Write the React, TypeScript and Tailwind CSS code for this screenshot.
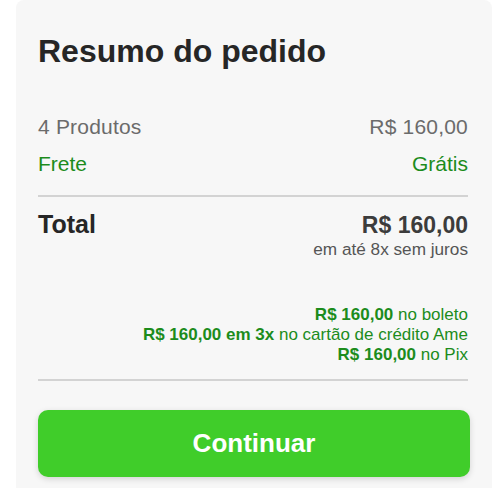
import React from "react"

const options = [
    { price: "R$ 160,00", extra: "", rest: " no boleto" },
    { price: "R$ 160,00", extra: " em 3x", rest: " no cartão de crédito Ame" },
    { price: "R$ 160,00", extra: "", rest: " no Pix" },
]

const App: React.FC = () => {
    return (
        <div className="min-h-screen bg-white font-['Liberation_Sans',Arial,sans-serif]">
            <div className="ml-4 mr-2 bg-[#f7f7f7] rounded-lg pl-[22px] pr-[24px] pt-[35px] pb-8">
                <h1 className="text-[32px] leading-none font-bold text-[#262626]">Resumo do pedido</h1>

                <div className="mt-[49px] flex justify-between text-[21px] tracking-[0.2px] leading-none text-[#6b6b6b]">
                    <span>4 Produtos</span>
                    <span>R$ 160,00</span>
                </div>
                <div className="mt-[16px] flex justify-between text-[21px] leading-none text-[#1c8c1c]">
                    <span>Frete</span>
                    <span>Grátis</span>
                </div>

                <div className="mt-[21px] h-[2px] bg-[#d3d3d3]" />

                <div className="mt-[15px] flex justify-between items-start">
                    <span className="text-[25px] leading-none font-bold text-[#262626]">Total</span>
                    <div className="flex flex-col items-end">
                        <span className="mt-[2px] text-[23px] leading-none font-bold text-[#3c3c3c]">R$ 160,00</span>
                        <span className="mt-[4px] text-[17.2px] leading-none text-[#555]">em até 8x sem juros</span>
                    </div>
                </div>

                <div className="mt-[47px] flex flex-col items-end text-[17px] leading-[20px] text-[#1c8c1c]">
                    {options.map((o, i) => (
                        <div key={i}>
                            <span className="font-bold">{o.price}{o.extra}</span>
                            {o.rest}
                        </div>
                    ))}
                </div>

                <div className="mt-[14px] h-[2px] bg-[#d3d3d3]" />

                <button className="mt-[29px] mr-[-2px] w-[calc(100%+2px)] h-[67px] rounded-[10px] bg-[#40cd2a] text-white text-[26px] font-bold shadow-[0_2px_6px_rgba(0,0,0,0.15)]">
                    Continuar
                </button>
            </div>
        </div>
    )
}

export default App
